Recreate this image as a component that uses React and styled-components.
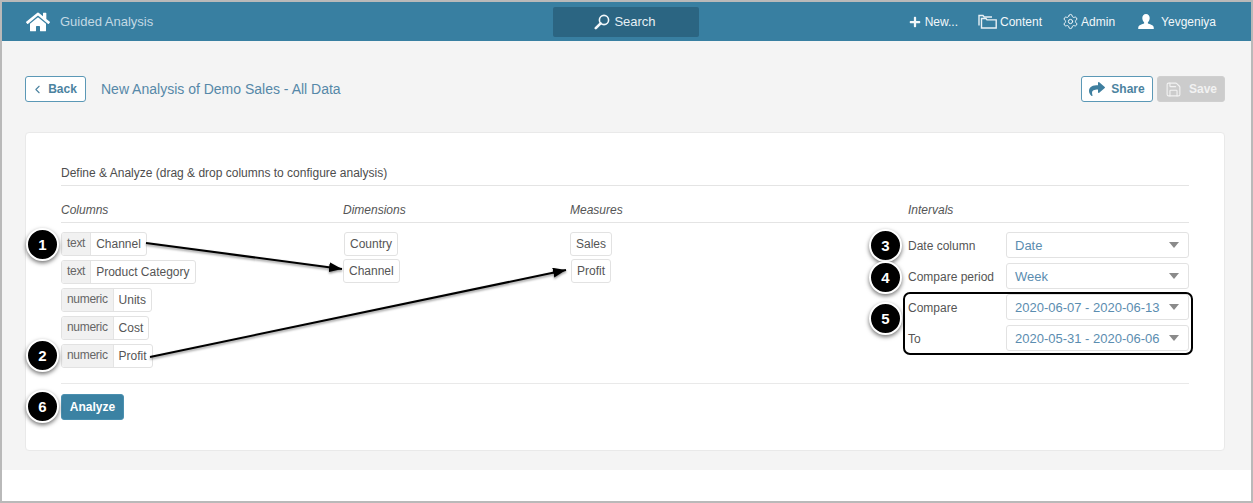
import React from "react";
import styled, { createGlobalStyle } from "styled-components";
import { FaHome, FaPlus, FaShare } from "react-icons/fa";
import { ChevronLeft, Settings, Save } from "lucide-react";

const GlobalStyle = createGlobalStyle`
  html, body {
    margin: 0;
    padding: 0;
    background: #fff;
    font-family: "Liberation Sans", Arial, sans-serif;
  }
`;

const Frame = styled.div`
  position: relative;
  box-sizing: border-box;
  width: 1253px;
  height: 503px;
  border: 2px solid #b9b9b9;
  background: #fff;
  overflow: hidden;
`;

const TopBar = styled.header`
  display: grid;
  grid-template-columns: 551px 146px 1fr;
  align-items: center;
  height: 39px;
  background: #387fa1;
  color: #fff;
`;

const Brand = styled.div`
  display: flex;
  align-items: center;
  padding-left: 24px;
  font-size: 13px;
  color: #c3d9e4;

  svg {
    color: #fff;
    margin-right: 10px;
  }
`;

const SearchBox = styled.div`
  display: flex;
  align-items: center;
  justify-content: center;
  gap: 4px;
  height: 30px;
  padding-right: 2px;
  background: #2b6582;
  border-radius: 2px;
  font-size: 13px;
  color: #e6eff4;
`;

const NavLinks = styled.nav`
  display: flex;
  justify-content: flex-end;
  align-items: center;
  padding-right: 35px;
`;

const NavLink = styled.span`
  display: flex;
  align-items: center;
  gap: ${(p) => p.$gap || 3}px;
  margin-left: ${(p) => p.$left || 20}px;
  font-size: 12px;
  color: #f2f7fa;
`;

const Main = styled.main`
  box-sizing: border-box;
  height: 429px;
  padding: 35px 26px 20px 23px;
  background: #f4f4f4;
`;

const TitleRow = styled.div`
  display: flex;
  align-items: center;
  height: 26px;
  margin-bottom: 30px;
`;

const OutlineButton = styled.button`
  display: inline-flex;
  align-items: center;
  justify-content: center;
  gap: ${(p) => p.$gap || 6}px;
  box-sizing: border-box;
  width: ${(p) => p.$width}px;
  height: 26px;
  padding: 0 ${(p) => p.$trim || 0}px 0 0;
  background: #fff;
  border: 1px solid #5b98b6;
  border-radius: 3px;
  font: bold 12px "Liberation Sans", Arial, sans-serif;
  color: #4c83a0;
`;

const PageTitle = styled.h1`
  flex: 1;
  margin: 0 0 0 15px;
  font-size: 14px;
  font-weight: normal;
  color: #5688a8;
`;

const SaveButton = styled.button`
  display: inline-flex;
  align-items: center;
  justify-content: center;
  gap: 7px;
  box-sizing: border-box;
  width: 68px;
  height: 26px;
  margin-left: 4px;
  padding: 0;
  background: #cccccc;
  border: 1px solid #cfcfcf;
  border-radius: 3px;
  font: bold 12px "Liberation Sans", Arial, sans-serif;
  color: #f2f2f2;
`;

const Card = styled.section`
  box-sizing: border-box;
  height: 319px;
  padding: 31px 35px 0;
  background: #fff;
  border: 1px solid #e9e9e9;
  border-radius: 4px;
`;

const CardTitle = styled.div`
  height: 22px;
  line-height: 16px;
  padding-top: 1px;
  box-sizing: border-box;
  border-bottom: 1px solid #e4e4e4;
  font-size: 12px;
  color: #4d4d4d;
`;

const Columns = styled.div`
  display: grid;
  grid-template-columns: 282px 227px 338px 281px;
  height: 197px;
`;

const Column = styled.div`
  display: flex;
  flex-direction: column;
`;

const ColumnHead = styled.div`
  box-sizing: border-box;
  height: 37px;
  padding-top: 17px;
  margin-bottom: 9px;
  border-bottom: 1px solid #e4e4e4;
  font-size: 12px;
  font-style: italic;
  color: #555;
`;

const Pill = styled.div`
  display: inline-flex;
  align-self: flex-start;
  box-sizing: border-box;
  height: 24px;
  margin-bottom: ${(p) => p.$gap ?? 4}px;
  margin-left: ${(p) => p.$nudge || 0}px;
  background: #fff;
  border: 1px solid #e2e2e2;
  border-radius: 3px;
  font-size: 12px;
  color: #555;
  overflow: hidden;
`;

const PillType = styled.span`
  display: flex;
  align-items: center;
  padding: 0 5px 2px;
  background: #f1f1f1;
  border-right: 1px solid #e4e4e4;
  font-size: 12px;
  letter-spacing: -0.3px;
  color: #666;
`;

const PillName = styled.span`
  display: flex;
  align-items: center;
  padding: 0 5px;
`;

const IntervalRow = styled.div`
  display: flex;
  align-items: center;
  height: 26px;
  margin-bottom: 5px;
  font-size: 12px;
  color: #555;
`;

const IntervalLabel = styled.span`
  width: 98px;
  flex: none;
  padding-top: 1px;
`;

const Select = styled.div`
  display: flex;
  align-items: center;
  justify-content: space-between;
  box-sizing: border-box;
  width: 183px;
  height: 26px;
  padding: 0 9px 0 8px;
  border: 1px solid #e2e2e2;
  border-radius: 3px;
  font-size: 13px;
  color: #5b8db0;

  &::after {
    content: "";
    border-left: 5px solid transparent;
    border-right: 5px solid transparent;
    border-top: 6px solid #8a8a8a;
  }
`;

const Footer = styled.div`
  padding-top: 10px;
  border-top: 1px solid #e9e9e9;
`;

const AnalyzeButton = styled.button`
  width: 63px;
  height: 26px;
  padding: 0;
  background: #3b82a3;
  border: 1px solid #4b90b0;
  border-radius: 3px;
  font: bold 12px "Liberation Sans", Arial, sans-serif;
  color: #fff;
`;

const Badge = styled.span`
  position: absolute;
  left: ${(p) => p.$x - 16.5}px;
  top: ${(p) => p.$y - 16.5}px;
  display: flex;
  align-items: center;
  justify-content: center;
  box-sizing: border-box;
  width: 33px;
  height: 33px;
  background: #000;
  border: 2px solid #fff;
  border-radius: 50%;
  box-shadow: 0 2px 4px rgba(0, 0, 0, 0.55);
  font-size: 15px;
  font-weight: bold;
  color: #fff;
`;

const Highlight = styled.div`
  position: absolute;
  left: 901px;
  top: 290px;
  width: 286px;
  height: 59px;
  border: 2px solid #000;
  border-radius: 7px;
`;

const ArrowLayer = styled.svg`
  position: absolute;
  left: 0;
  top: 0;
  pointer-events: none;
`;

// handle points down-left, so this is not the stock search icon
const SearchIcon = () => (
  <svg width="16" height="16" viewBox="0 0 16 16" fill="none" stroke="#f2f7fa">
    <circle cx="10" cy="6" r="4.6" strokeWidth="1.6" />
    <path d="M6.600 9.400L1.800 14.200" strokeWidth="2.600" strokeLinecap="round" />
  </svg>
);

// folder stack in the top bar
const FolderIcon = () => (
  <svg width="19" height="15" viewBox="0 0 19 15" fill="none" stroke="#e9f1f5" strokeWidth="1.4">
    <path d="M1 11.500V1.500h4l1.200 1.500H14" />
    <path d="M3.500 14V4.500h4.500l1 1.400h9.200V14z" />
  </svg>
);

const UserIcon = () => (
  <svg width="16" height="15" viewBox="0 0 16 15" fill="#fff">
    <path d="M8 0c2.300 0 3.700 1.700 3.700 4 0 1.700-.8 3.300-1.800 4.200v1.300c1.900.8 5.100 1.600 5.600 3.100.2.600.3 1.400.3 2.400H.2c0-1 .1-1.800.3-2.400.5-1.500 3.700-2.300 5.600-3.100V8.200C5.100 7.300 4.300 5.700 4.300 4 4.300 1.700 5.700 0 8 0z" />
  </svg>
);

const columns = [
  { type: "text", name: "Channel" },
  { type: "text", name: "Product Category" },
  { type: "numeric", name: "Units" },
  { type: "numeric", name: "Cost" },
  { type: "numeric", name: "Profit" },
];

const intervals = [
  { label: "Date column", value: "Date" },
  { label: "Compare period", value: "Week" },
  { label: "Compare", value: "2020-06-07 - 2020-06-13" },
  { label: "To", value: "2020-05-31 - 2020-06-06" },
];

const badges = [
  { n: 1, x: 40.5, y: 242 },
  { n: 2, x: 40.5, y: 353.5 },
  { n: 3, x: 883.5, y: 243 },
  { n: 4, x: 883.5, y: 275.5 },
  { n: 5, x: 883.5, y: 316.5 },
  { n: 6, x: 40.5, y: 404.5 },
];

export default function App() {
  return (
    <Frame>
      <GlobalStyle />
      <TopBar>
        <Brand>
          <FaHome size={24} />
          Guided Analysis
        </Brand>
        <SearchBox>
          <SearchIcon />
          Search
        </SearchBox>
        <NavLinks>
          <NavLink $gap={4}>
            <FaPlus size={12} />
            New...
          </NavLink>
          <NavLink $left={20} $gap={3}>
            <FolderIcon />
            Content
          </NavLink>
          <NavLink $left={20} $gap={2}>
            <Settings size={17} strokeWidth={1.4} />
            Admin
          </NavLink>
          <NavLink $left={23} $gap={7}>
            <UserIcon />
            Yevgeniya
          </NavLink>
        </NavLinks>
      </TopBar>

      <Main>
        <TitleRow>
          <OutlineButton $width={61} $gap={4} $trim={3}>
            <ChevronLeft size={13} strokeWidth={2} />
            Back
          </OutlineButton>
          <PageTitle>New Analysis of Demo Sales - All Data</PageTitle>
          <OutlineButton $width={72}>
            <FaShare size={16} color="#3f7f9f" />
            Share
          </OutlineButton>
          <SaveButton>
            <Save size={17} strokeWidth={1.6} />
            Save
          </SaveButton>
        </TitleRow>

        <Card>
          <CardTitle>Define &amp; Analyze (drag &amp; drop columns to configure analysis)</CardTitle>
          <Columns>
            <Column>
              <ColumnHead>Columns</ColumnHead>
              {columns.map((c) => (
                <Pill key={c.name}>
                  <PillType>{c.type}</PillType>
                  <PillName>{c.name}</PillName>
                </Pill>
              ))}
            </Column>
            <Column>
              <ColumnHead>Dimensions</ColumnHead>
              <Pill $nudge={1} $gap={3}>
                <PillName>Country</PillName>
              </Pill>
              <Pill>
                <PillName>Channel</PillName>
              </Pill>
            </Column>
            <Column>
              <ColumnHead>Measures</ColumnHead>
              <Pill $gap={3}>
                <PillName>Sales</PillName>
              </Pill>
              <Pill $nudge={1}>
                <PillName>Profit</PillName>
              </Pill>
            </Column>
            <Column>
              <ColumnHead>Intervals</ColumnHead>
              {intervals.map((r) => (
                <IntervalRow key={r.label}>
                  <IntervalLabel>{r.label}</IntervalLabel>
                  <Select>{r.value}</Select>
                </IntervalRow>
              ))}
            </Column>
          </Columns>
          <Footer>
            <AnalyzeButton>Analyze</AnalyzeButton>
          </Footer>
        </Card>
      </Main>

      <ArrowLayer width="1249" height="499">
        <defs>
          <marker id="head" markerWidth="13" markerHeight="10" refX="13" refY="5" orient="auto" markerUnits="userSpaceOnUse">
            <path d="M0 0L13 5L0 10z" fill="#000" />
          </marker>
          <filter id="soft" x="-5%" y="-20%" width="110%" height="140%">
            <feDropShadow dx="0" dy="1.500" stdDeviation="1" floodColor="#000" floodOpacity="0.45" />
          </filter>
        </defs>
        <g filter="url(#soft)" stroke="#000" strokeWidth="2" fill="none">
          <path d="M144 241L340 267" markerEnd="url(#head)" />
          <path d="M148 355L564 268" markerEnd="url(#head)" />
        </g>
      </ArrowLayer>

      <Highlight />
      {badges.map((b) => (
        <Badge key={b.n} $x={b.x} $y={b.y}>
          {b.n}
        </Badge>
      ))}
    </Frame>
  );
}
